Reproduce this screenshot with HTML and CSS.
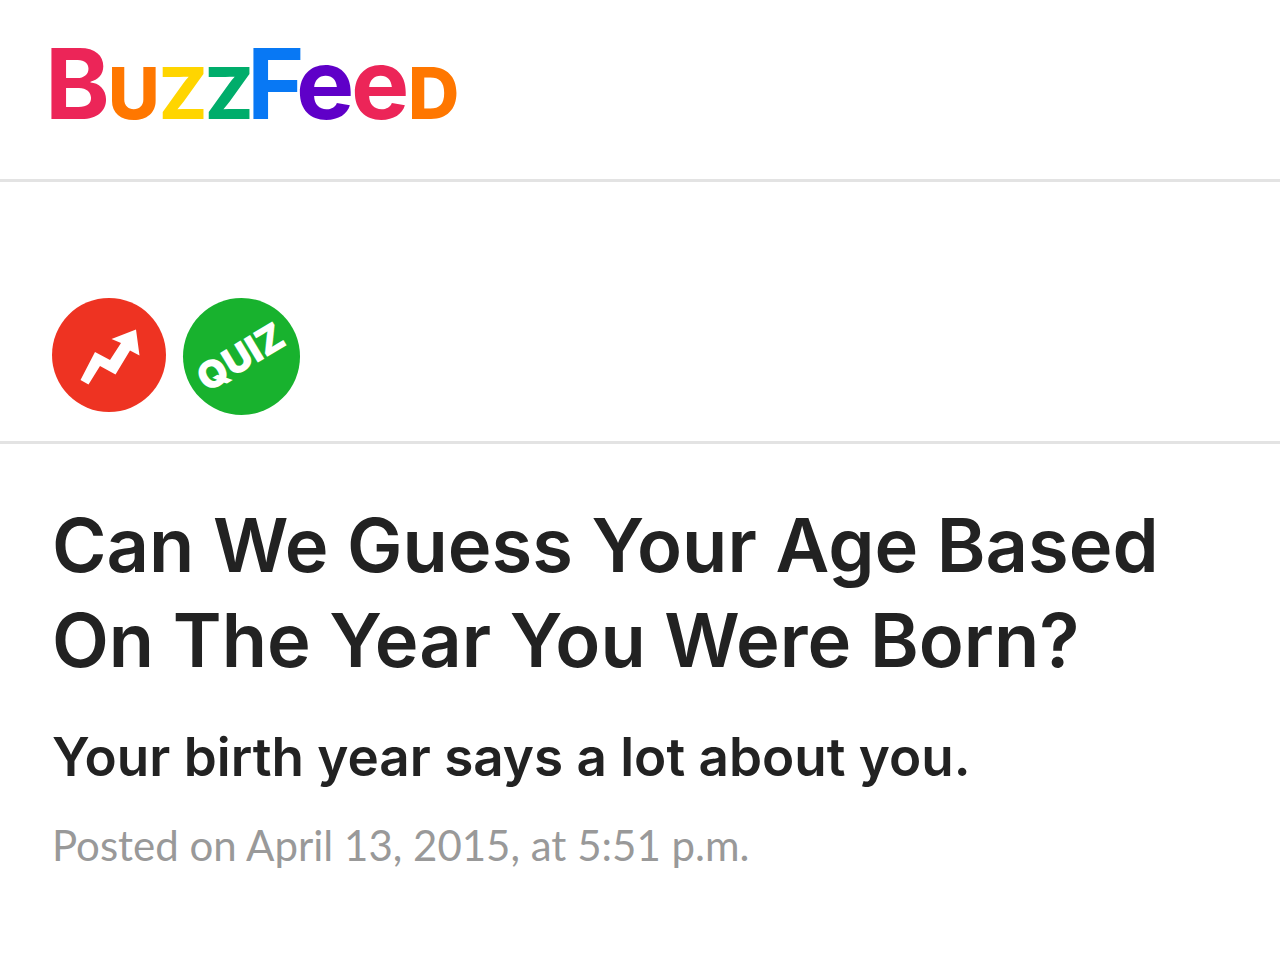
FILE: index.html
```html
<!DOCTYPE html>
<html lang="en">
<head>
<meta charset="UTF-8">
<meta name="viewport" content="width=device-width">
<title>Can We Guess Your Age Based On The Year You Were Born?</title>
<link rel="stylesheet" href="styles.css">
</head>
<body>
<header class="site-header">
	<a class="logo" href="#" aria-label="BuzzFeed">
		<svg width="410" height="76" viewBox="0 0 410 76">
			<text class="logo-text" y="72">
				<tspan class="big pink" x="-7">B</tspan><tspan class="small orange" x="56">U</tspan><tspan class="small yellow" x="107">Z</tspan><tspan class="small green" x="153">Z</tspan><tspan class="big blue" x="195">F</tspan><tspan class="big purple" x="244">e</tspan><tspan class="big pink" x="299">e</tspan><tspan class="small orange" x="356">D</tspan>
			</text>
		</svg>
	</a>
</header>
<nav class="badges">
	<a href="#" aria-label="Trending">
		<svg width="114" height="114" viewBox="0 0 114 114">
			<circle cx="57" cy="57" r="57" fill="#ee3322"/>
			<path d="M28.500 82L43 54L58 62L69 45L59.500 41L84 31.500L87.500 57.500L78 52.500L63.500 76.500L48 68L36.500 86.500Z" fill="#fff"/>
		</svg>
	</a>
	<a href="#">
		<svg width="117" height="117" viewBox="0 0 117 117">
			<circle cx="58.500" cy="58.500" r="58.500" fill="#18b22e"/>
			<text class="quiz-text" x="24" y="95" transform="rotate(-31 24 95)">QUIZ</text>
		</svg>
	</a>
</nav>
<main class="article">
	<h1>Can We Guess Your Age Based On The Year You Were Born?</h1>
	<h2>Your birth year says a lot about you.</h2>
	<p class="posted">Posted on April 13, 2015, at 5:51 p.m.</p>
</main>
</body>
</html>
```
FILE: styles.css
```css
body {
	margin: 0;
	background-color: #fff;
	color: #222;
	font-family: Inter, "Open Sans", sans-serif;
}
a {
	display: block;
}
svg {
	display: block;
	overflow: visible;
}
.site-header {
	padding: 47px 52px 56px;
	border-bottom: 3px solid #e3e3e3;
}
.logo {
	width: 410px;
}
.big {
	font-size: 98px;
	font-weight: 700;
}
.small {
	font-size: 71px;
	font-weight: 800;
}
.pink { fill: #ec2558; }
.orange { fill: #ff7700; }
.yellow { fill: #ffd500; }
.green { fill: #00ad6b; }
.blue { fill: #0878f4; }
.purple { fill: #5f00c8; }
.badges {
	display: flex;
	gap: 17px;
	padding: 116px 52px 26px;
	border-bottom: 3px solid #e3e3e3;
}
.quiz-text {
	fill: #fff;
	font-size: 38px;
	font-weight: 900;
}
.article {
	padding: 54px 52px;
}
h1 {
	margin: 0;
	font-size: 74px;
	font-weight: 600;
	line-height: 95px;
}
h2 {
	margin: 34px 0 0;
	font-size: 53px;
	font-weight: 600;
	line-height: 70px;
}
.posted {
	margin: 24px 0 0;
	color: #999;
	font-family: Lato, sans-serif;
	font-size: 42px;
	line-height: 58px;
}
```
